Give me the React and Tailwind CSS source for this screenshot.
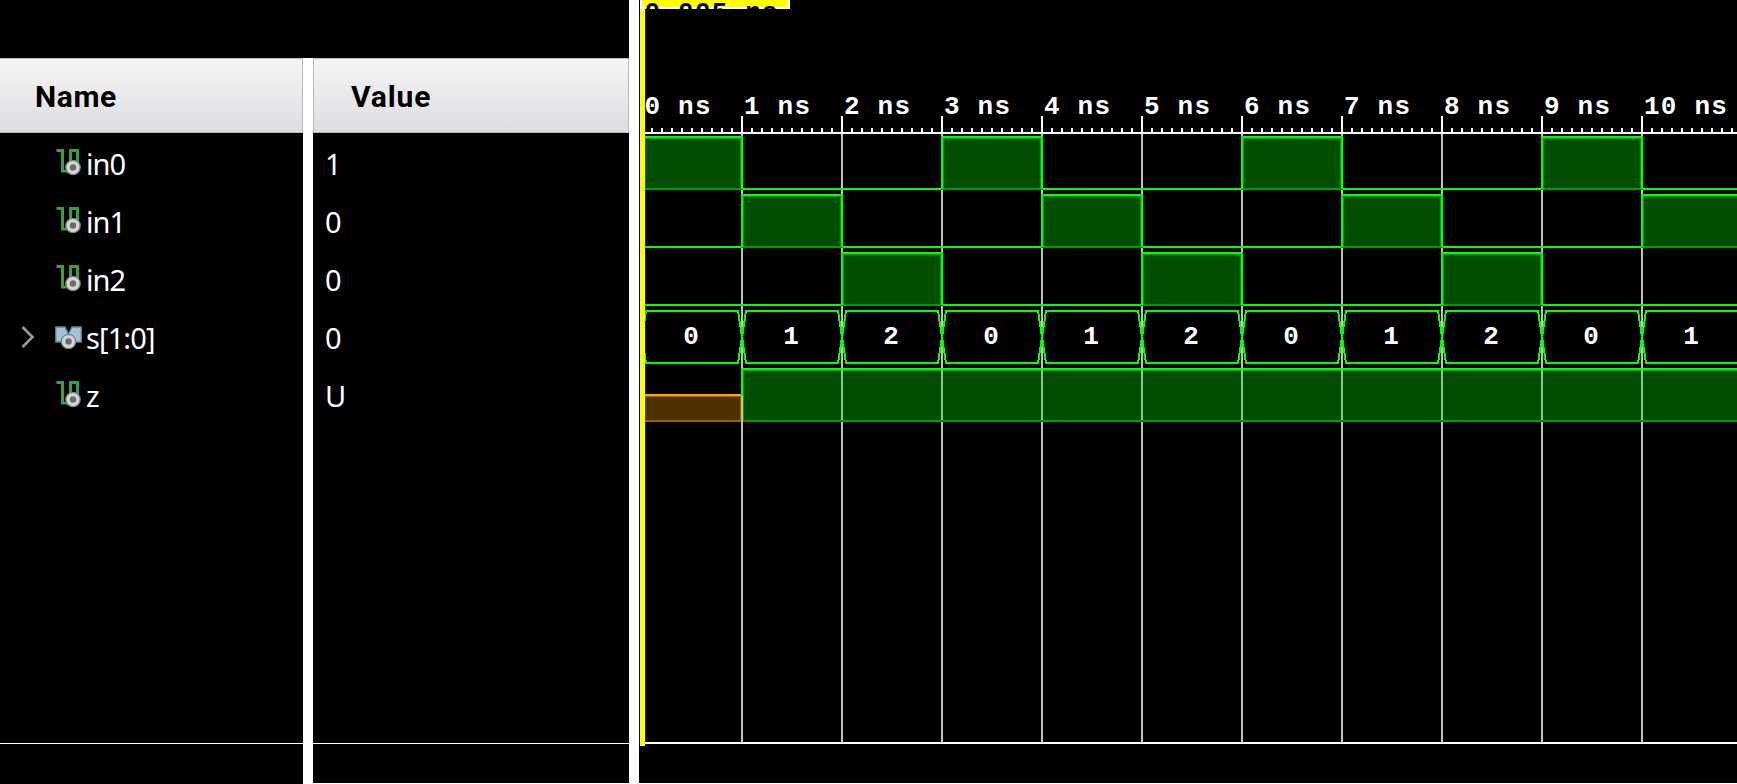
const SIGNALS = [
  { name: 'in0', value: '1' },
  { name: 'in1', value: '0' },
  { name: 'in2', value: '0' },
  { name: 's[1:0]', value: '0', bus: true },
  { name: 'z', value: 'U' },
];

// Horizontal scale of the wave area: one nanosecond is 100px, 0 ns sits at x = 2.
const X0 = 2;
const W = 1098;
const xAt = (ns) => X0 + ns * 100;

function Disc({ cx }) {
  return (
    <>
      <circle cx={cx} cy="19.5" r="7.2" fill="#d4d4d4" stroke="#7c7c7c" strokeWidth="1.3" />
      <circle cx={cx} cy="19.5" r="3.2" fill="#6c6c6c" />
    </>
  );
}

function ScalarIcon() {
  return (
    <svg className="mb-1 h-7 w-7 shrink-0" viewBox="0 0 28 28">
      <path d="M1.500 2.500H7.500V23H15.500V2.500H22.500V24" fill="none" stroke="#36a046" strokeWidth="3" />
      <Disc cx="18" />
    </svg>
  );
}

function BusIcon() {
  return (
    <svg className="mb-1 h-7 w-7 shrink-0" viewBox="0 0 28 28">
      <path d="M.8 5H10L13.500 12L17 5H26.300V20H.8Z" fill="#9cc6dc" stroke="#6d7f88" strokeWidth="1.3" />
      <Disc cx="13.5" />
    </svg>
  );
}

function Header({ children, className }) {
  return (
    <div className={`flex h-[75px] items-center border border-[#b9b9bb] bg-linear-to-b from-[#f5f5f5] to-[#dddde1] pt-0.5 font-[Roboto,sans-serif] text-[30px] font-bold text-black ${className}`}>
      {children}
    </div>
  );
}

function NameColumn() {
  return (
    <div className="flex w-[303px] shrink-0 flex-col bg-black">
      <Header className="border-l-0 pl-[35px]"><span className="tracking-[0.6px]">Name</span></Header>
      <div className="flex h-[611px] flex-col border-b border-white pt-[2px]">
        {SIGNALS.map((s) => (
          <div key={s.name} className="flex h-[58px] items-center">
            <div className="flex w-[55px] shrink-0 pl-[21px]">
              {s.bus && (
                <svg className="mb-0.5 h-6 w-4" viewBox="0 0 16 24" fill="none" stroke="#999" strokeWidth="2.6">
                  <path d="M1.500 2L11.500 12L1.500 22" />
                </svg>
              )}
            </div>
            {s.bus ? <BusIcon /> : <ScalarIcon />}
            <span className="pb-0.5 pl-[3px] text-[29px] leading-none tracking-[-0.9px]">{s.name}</span>
          </div>
        ))}
      </div>
    </div>
  );
}

function ValueColumn() {
  return (
    <div className="flex w-[316px] shrink-0 flex-col border-b border-white bg-black">
      <Header className="pl-[37px]"><span className="tracking-[0.9px]">Value</span></Header>
      <div className="flex h-[611px] flex-col border-b border-white pt-[2px]">
        {SIGNALS.map((s) => (
          <div key={s.name} className="flex h-[58px] items-center pb-0.5 pl-3 text-[29px] leading-none">{s.value}</div>
        ))}
      </div>
    </div>
  );
}

function Pulse({ from, to, y }) {
  const x = from;
  const w = to - from;
  return (
    <g>
      <rect x={x} y={y} width={w + 2} height="54" fill="#004c00" />
      <rect x={x + 2} y={y + 2} width={w - 2} height="1" fill="#009900" />
      <rect x={x + 2} y={y + 2} width="1" height="50" fill="#009900" />
      <rect x={x + w - 1} y={y + 2} width="1" height="50" fill="#009900" />
      <rect x={x} y={y + 52} width={w + 2} height="2" fill="#009900" />
      <path d={`M${x + 1} ${y + 53}V${y + 1}H${x + w + 1}V${y + 53}`} fill="none" stroke="#0f0" strokeWidth="2" />
    </g>
  );
}

function Scalar({ y, phase }) {
  const starts = [0, 1, 2, 3].map((k) => phase + k * 3).filter((n) => n <= 10);
  return (
    <g>
      <rect x="0" y={y + 52} width={W} height="2" fill="#0f0" />
      {starts.map((n) => (
        <Pulse key={n} from={n === 0 ? -20 : xAt(n)} to={xAt(n + 1)} y={y} />
      ))}
    </g>
  );
}

function Waves() {
  const ns = Array.from({ length: 11 }, (_, i) => i);
  return (
    <svg className="block h-[783px] w-[1098px] bg-black" viewBox="0 0 1098 783" shapeRendering="crispEdges">
      {ns.slice(1).map((n) => (
        <rect key={n} x={xAt(n)} y="134" width="2" height="608" fill="#c0c0c0" />
      ))}

      <Scalar y={136} phase={0} />
      <Scalar y={194} phase={1} />
      <Scalar y={252} phase={2} />

      {ns.map((n) => (
        <g key={n}>
          <path
            d={`M${xAt(n) + 1} 337L${xAt(n) + 5} 311H${xAt(n + 1) - 3}L${xAt(n + 1) + 1} 337L${xAt(n + 1) - 3} 363H${xAt(n) + 5}Z`}
            fill="none"
            stroke="#0f0"
            strokeWidth="2"
          />
          <text x={xAt(n) + 50} y="344" textAnchor="middle" fontSize="26" fontWeight="700" fill="#fff">{n % 3}</text>
        </g>
      ))}

      <Pulse from={xAt(1)} to={1120} y={368} />
      {ns.slice(2).map((n) => (
        <rect key={n} x={xAt(n)} y="370" width="2" height="50" fill="#84cc84" />
      ))}
      <rect x="0" y="394" width="102" height="28" fill="#4c3200" />
      <path d="M0 396.500H101.500V420" fill="none" stroke="#996300" strokeWidth="1" />
      <rect x="0" y="394" width="102" height="2" fill="#ffa500" />
      <rect x="0" y="420" width="102" height="2" fill="#996300" />
      <rect x="102" y="396" width="1" height="26" fill="#d0b890" />
      <rect x="103" y="396" width="1" height="26" fill="#a8d8a8" />

      {Array.from({ length: 109 }, (_, i) => (
        <rect key={i} x={12 + i * 10} y="128" width="2" height="4" fill="#fff" />
      ))}
      {ns.map((n) => (
        <g key={n}>
          <rect x={xAt(n)} y="116" width="2" height="16" fill="#fff" />
          <text x={n === 0 ? 5.500 : xAt(n) + 3} y="113.5" fontSize="26" fontWeight="700" letterSpacing="1.2" fill="#fff" xmlSpace="preserve">{`${n} ns`}</text>
        </g>
      ))}
      <rect x="0" y="132" width={W} height="2" fill="#fff" />
      <rect x="0" y="742" width={W} height="2" fill="#fff" />

      <rect x="0" y="0" width="1" height="783" fill="#000" />
      <rect x="1" y="0" width="5" height="746" fill="#ff0" />
      <rect x="1" y="0" width="150" height="9" fill="#fff" />
      <rect x="3" y="0" width="146" height="7" fill="#ff0" />
      <rect x="1" y="9" width="5" height="3" fill="#ff0" />
      <clipPath id="cursorLabel"><rect x="0" y="0" width="151" height="9" /></clipPath>
      <text x="5.5" y="20" fontSize="26" fontWeight="700" letterSpacing="1.2" fill="#000" clipPath="url(#cursorLabel)">0.005 ns</text>
    </svg>
  );
}

export default function App() {
  return (
    <div className="flex h-[784px] w-[1737px] overflow-hidden bg-white font-['Noto_Sans',sans-serif] text-white">
      <div className="flex w-[629px] shrink-0 flex-col">
        <div className="h-[58px] bg-black" />
        <div className="flex flex-1 gap-[10px]">
          <NameColumn />
          <ValueColumn />
        </div>
      </div>
      <div className="ml-[10px] w-[1098px] shrink-0 font-['Liberation_Mono',monospace]">
        <Waves />
      </div>
    </div>
  );
}
